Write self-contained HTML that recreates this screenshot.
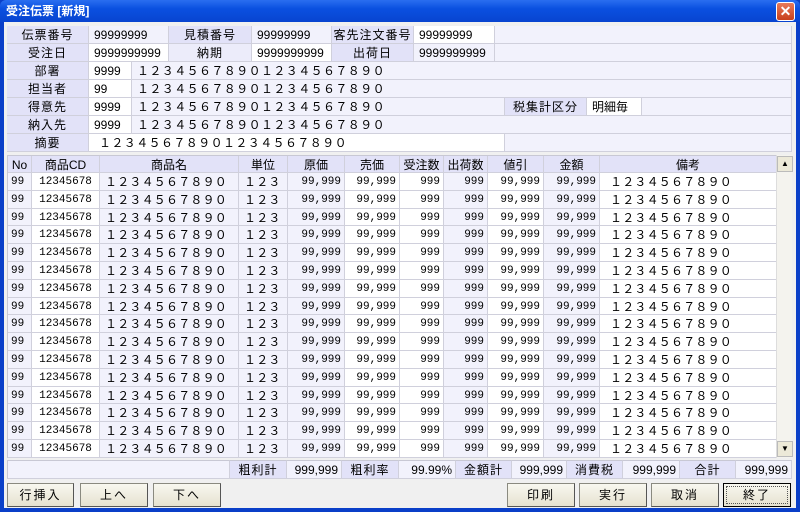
<!DOCTYPE html>
<html><head><meta charset="utf-8"><style>
*{box-sizing:border-box;margin:0;padding:0}
body{width:800px;height:512px;overflow:hidden;background:#0a3fc8;font-family:"Liberation Sans","Noto Sans CJK JP",sans-serif;font-size:12px;color:#000;position:relative}
#title{position:absolute;left:0;top:0;width:800px;height:22px;background:linear-gradient(#2a6ef0,#0a50e0 40%,#0844d0);border-radius:6px 6px 0 0;color:#fff;font-weight:bold;font-size:12px;line-height:22px;padding-left:6px}
#close{position:absolute;right:5px;top:2px;width:19px;height:19px;background:linear-gradient(#e87a5a,#c8401c);border:1px solid #fff;border-radius:3px;color:#fff;font-size:14px;line-height:16px;text-align:center;font-weight:bold}
#client{position:absolute;left:4px;top:22px;width:792px;height:486px;background:#f0f0f0}
.c{position:absolute;height:18px;line-height:18px;border-right:1px solid #d0d0dc;border-bottom:1px solid #d0d0dc;white-space:nowrap;overflow:hidden}
.L{background:#e2e2f8;text-align:center;letter-spacing:1px}
.W{background:#fff;padding-left:5px}
.P{background:#f2f2fc;padding-left:5px}
.fw{letter-spacing:0.4px}
#grid{position:absolute;left:7px;top:155px;width:785px;height:303px;background:#f0f0f0;border:1px solid #c8c8d4}
.row{position:absolute;left:0;height:17.8px;display:flex}
.row div{height:100%;border-right:1px solid #d0d0dc;border-bottom:1px solid #d0d0dc;line-height:18px;white-space:nowrap;overflow:hidden;font-family:"Liberation Mono","Noto Sans CJK JP",monospace;font-size:11px}
.hd div{background:#e2e2f8;text-align:center;font-family:"Liberation Sans","Noto Sans CJK JP",sans-serif;font-size:12px}
.lv{background:#f2f2fc}.wh{background:#fff}
.r{text-align:right;padding-right:3px}.l{padding-left:5px}.ct{text-align:center}
.n{font-family:"Liberation Sans","Noto Sans CJK JP",sans-serif!important;font-size:12px!important;letter-spacing:0.2px}
#sb{position:absolute;left:776px;top:155px;width:16px;height:303px;background:#f4f3ee;border-left:1px solid #ddd}
.sbb{position:absolute;left:0;width:16px;height:16px;background:#ece9d8;border:1px solid #bbb;font-size:8px;text-align:center;line-height:14px}
.btn{position:absolute;top:483px;height:24px;background:linear-gradient(#f8f8f0,#e6e2d0);border:1px solid #8a8a80;border-right-color:#555;border-bottom-color:#555;text-align:center;line-height:22px;letter-spacing:2px}
</style></head><body>
<div id="title">受注伝票 [新規]</div><div id="close">✕</div>
<div id="client"></div>
<div style="position:absolute;left:7px;top:26px;width:785px;height:126px;background:#f2f2fc;border:1px solid #c8c8d4"></div>
<div class="c L" style="left:7px;top:26px;width:82px">伝票番号</div>
<div class="c P" style="left:89px;top:26px;width:80px">99999999</div>
<div class="c L" style="left:169px;top:26px;width:83px">見積番号</div>
<div class="c P" style="left:252px;top:26px;width:80px">99999999</div>
<div class="c L" style="left:332px;top:26px;width:82px">客先注文番号</div>
<div class="c W" style="left:414px;top:26px;width:81px">99999999</div>
<div class="c P" style="left:495px;top:26px;width:297px"></div>
<div class="c L" style="left:7px;top:44px;width:82px">受注日</div>
<div class="c W" style="left:89px;top:44px;width:80px">9999999999</div>
<div class="c L" style="left:169px;top:44px;width:83px;background:#ececfa">納期</div>
<div class="c W" style="left:252px;top:44px;width:80px">9999999999</div>
<div class="c L" style="left:332px;top:44px;width:82px">出荷日</div>
<div class="c P" style="left:414px;top:44px;width:81px">9999999999</div>
<div class="c P" style="left:495px;top:44px;width:297px"></div>
<div class="c L" style="left:7px;top:62px;width:82px">部署</div>
<div class="c W" style="left:89px;top:62px;width:43px">9999</div>
<div class="c P fw" style="left:132px;top:62px;width:660px">１２３４５６７８９０１２３４５６７８９０</div>
<div class="c L" style="left:7px;top:80px;width:82px">担当者</div>
<div class="c W" style="left:89px;top:80px;width:43px">99</div>
<div class="c P fw" style="left:132px;top:80px;width:660px">１２３４５６７８９０１２３４５６７８９０</div>
<div class="c L" style="left:7px;top:98px;width:82px">得意先</div>
<div class="c W" style="left:89px;top:98px;width:43px">9999</div>
<div class="c P fw" style="left:132px;top:98px;width:373px">１２３４５６７８９０１２３４５６７８９０</div>
<div class="c L" style="left:505px;top:98px;width:82px">税集計区分</div>
<div class="c W" style="left:587px;top:98px;width:55px">明細毎</div>
<div class="c P" style="left:642px;top:98px;width:150px"></div>
<div class="c L" style="left:7px;top:116px;width:82px">納入先</div>
<div class="c W" style="left:89px;top:116px;width:43px">9999</div>
<div class="c P fw" style="left:132px;top:116px;width:660px">１２３４５６７８９０１２３４５６７８９０</div>
<div class="c L" style="left:7px;top:134px;width:82px">摘要</div>
<div class="c W fw" style="left:89px;top:134px;width:416px;padding-left:10px">１２３４５６７８９０１２３４５６７８９０</div>
<div class="c P" style="left:505px;top:134px;width:287px"></div>

<div id="grid">
<div class="row hd" style="top:0;height:17px"><div style="width:24px">No</div><div style="width:68px">商品CD</div><div style="width:139px">商品名</div><div style="width:49px">単位</div><div style="width:57px">原価</div><div style="width:55px">売価</div><div style="width:44px">受注数</div><div style="width:44px">出荷数</div><div style="width:56px">値引</div><div style="width:56px">金額</div><div style="width:177px">備考</div></div>
<div class="row" style="top:17px"><div class="lv l" style="width:24px;padding-left:3px">99</div><div class="wh ct" style="width:68px">12345678</div><div class="lv l n" style="width:139px">１２３４５６７８９０</div><div class="lv l n" style="width:49px">１２３</div><div class="lv r" style="width:57px">99,999</div><div class="wh r" style="width:55px">99,999</div><div class="wh r" style="width:44px">999</div><div class="lv r" style="width:44px">999</div><div class="wh r" style="width:56px">99,999</div><div class="lv r" style="width:56px">99,999</div><div class="wh l n" style="width:177px;padding-left:10px">１２３４５６７８９０</div></div>
<div class="row" style="top:34.8px"><div class="lv l" style="width:24px;padding-left:3px">99</div><div class="wh ct" style="width:68px">12345678</div><div class="lv l n" style="width:139px">１２３４５６７８９０</div><div class="lv l n" style="width:49px">１２３</div><div class="lv r" style="width:57px">99,999</div><div class="wh r" style="width:55px">99,999</div><div class="wh r" style="width:44px">999</div><div class="lv r" style="width:44px">999</div><div class="wh r" style="width:56px">99,999</div><div class="lv r" style="width:56px">99,999</div><div class="wh l n" style="width:177px;padding-left:10px">１２３４５６７８９０</div></div>
<div class="row" style="top:52.6px"><div class="lv l" style="width:24px;padding-left:3px">99</div><div class="wh ct" style="width:68px">12345678</div><div class="lv l n" style="width:139px">１２３４５６７８９０</div><div class="lv l n" style="width:49px">１２３</div><div class="lv r" style="width:57px">99,999</div><div class="wh r" style="width:55px">99,999</div><div class="wh r" style="width:44px">999</div><div class="lv r" style="width:44px">999</div><div class="wh r" style="width:56px">99,999</div><div class="lv r" style="width:56px">99,999</div><div class="wh l n" style="width:177px;padding-left:10px">１２３４５６７８９０</div></div>
<div class="row" style="top:70.4px"><div class="lv l" style="width:24px;padding-left:3px">99</div><div class="wh ct" style="width:68px">12345678</div><div class="lv l n" style="width:139px">１２３４５６７８９０</div><div class="lv l n" style="width:49px">１２３</div><div class="lv r" style="width:57px">99,999</div><div class="wh r" style="width:55px">99,999</div><div class="wh r" style="width:44px">999</div><div class="lv r" style="width:44px">999</div><div class="wh r" style="width:56px">99,999</div><div class="lv r" style="width:56px">99,999</div><div class="wh l n" style="width:177px;padding-left:10px">１２３４５６７８９０</div></div>
<div class="row" style="top:88.2px"><div class="lv l" style="width:24px;padding-left:3px">99</div><div class="wh ct" style="width:68px">12345678</div><div class="lv l n" style="width:139px">１２３４５６７８９０</div><div class="lv l n" style="width:49px">１２３</div><div class="lv r" style="width:57px">99,999</div><div class="wh r" style="width:55px">99,999</div><div class="wh r" style="width:44px">999</div><div class="lv r" style="width:44px">999</div><div class="wh r" style="width:56px">99,999</div><div class="lv r" style="width:56px">99,999</div><div class="wh l n" style="width:177px;padding-left:10px">１２３４５６７８９０</div></div>
<div class="row" style="top:106px"><div class="lv l" style="width:24px;padding-left:3px">99</div><div class="wh ct" style="width:68px">12345678</div><div class="lv l n" style="width:139px">１２３４５６７８９０</div><div class="lv l n" style="width:49px">１２３</div><div class="lv r" style="width:57px">99,999</div><div class="wh r" style="width:55px">99,999</div><div class="wh r" style="width:44px">999</div><div class="lv r" style="width:44px">999</div><div class="wh r" style="width:56px">99,999</div><div class="lv r" style="width:56px">99,999</div><div class="wh l n" style="width:177px;padding-left:10px">１２３４５６７８９０</div></div>
<div class="row" style="top:123.8px"><div class="lv l" style="width:24px;padding-left:3px">99</div><div class="wh ct" style="width:68px">12345678</div><div class="lv l n" style="width:139px">１２３４５６７８９０</div><div class="lv l n" style="width:49px">１２３</div><div class="lv r" style="width:57px">99,999</div><div class="wh r" style="width:55px">99,999</div><div class="wh r" style="width:44px">999</div><div class="lv r" style="width:44px">999</div><div class="wh r" style="width:56px">99,999</div><div class="lv r" style="width:56px">99,999</div><div class="wh l n" style="width:177px;padding-left:10px">１２３４５６７８９０</div></div>
<div class="row" style="top:141.6px"><div class="lv l" style="width:24px;padding-left:3px">99</div><div class="wh ct" style="width:68px">12345678</div><div class="lv l n" style="width:139px">１２３４５６７８９０</div><div class="lv l n" style="width:49px">１２３</div><div class="lv r" style="width:57px">99,999</div><div class="wh r" style="width:55px">99,999</div><div class="wh r" style="width:44px">999</div><div class="lv r" style="width:44px">999</div><div class="wh r" style="width:56px">99,999</div><div class="lv r" style="width:56px">99,999</div><div class="wh l n" style="width:177px;padding-left:10px">１２３４５６７８９０</div></div>
<div class="row" style="top:159.4px"><div class="lv l" style="width:24px;padding-left:3px">99</div><div class="wh ct" style="width:68px">12345678</div><div class="lv l n" style="width:139px">１２３４５６７８９０</div><div class="lv l n" style="width:49px">１２３</div><div class="lv r" style="width:57px">99,999</div><div class="wh r" style="width:55px">99,999</div><div class="wh r" style="width:44px">999</div><div class="lv r" style="width:44px">999</div><div class="wh r" style="width:56px">99,999</div><div class="lv r" style="width:56px">99,999</div><div class="wh l n" style="width:177px;padding-left:10px">１２３４５６７８９０</div></div>
<div class="row" style="top:177.2px"><div class="lv l" style="width:24px;padding-left:3px">99</div><div class="wh ct" style="width:68px">12345678</div><div class="lv l n" style="width:139px">１２３４５６７８９０</div><div class="lv l n" style="width:49px">１２３</div><div class="lv r" style="width:57px">99,999</div><div class="wh r" style="width:55px">99,999</div><div class="wh r" style="width:44px">999</div><div class="lv r" style="width:44px">999</div><div class="wh r" style="width:56px">99,999</div><div class="lv r" style="width:56px">99,999</div><div class="wh l n" style="width:177px;padding-left:10px">１２３４５６７８９０</div></div>
<div class="row" style="top:195px"><div class="lv l" style="width:24px;padding-left:3px">99</div><div class="wh ct" style="width:68px">12345678</div><div class="lv l n" style="width:139px">１２３４５６７８９０</div><div class="lv l n" style="width:49px">１２３</div><div class="lv r" style="width:57px">99,999</div><div class="wh r" style="width:55px">99,999</div><div class="wh r" style="width:44px">999</div><div class="lv r" style="width:44px">999</div><div class="wh r" style="width:56px">99,999</div><div class="lv r" style="width:56px">99,999</div><div class="wh l n" style="width:177px;padding-left:10px">１２３４５６７８９０</div></div>
<div class="row" style="top:212.8px"><div class="lv l" style="width:24px;padding-left:3px">99</div><div class="wh ct" style="width:68px">12345678</div><div class="lv l n" style="width:139px">１２３４５６７８９０</div><div class="lv l n" style="width:49px">１２３</div><div class="lv r" style="width:57px">99,999</div><div class="wh r" style="width:55px">99,999</div><div class="wh r" style="width:44px">999</div><div class="lv r" style="width:44px">999</div><div class="wh r" style="width:56px">99,999</div><div class="lv r" style="width:56px">99,999</div><div class="wh l n" style="width:177px;padding-left:10px">１２３４５６７８９０</div></div>
<div class="row" style="top:230.6px"><div class="lv l" style="width:24px;padding-left:3px">99</div><div class="wh ct" style="width:68px">12345678</div><div class="lv l n" style="width:139px">１２３４５６７８９０</div><div class="lv l n" style="width:49px">１２３</div><div class="lv r" style="width:57px">99,999</div><div class="wh r" style="width:55px">99,999</div><div class="wh r" style="width:44px">999</div><div class="lv r" style="width:44px">999</div><div class="wh r" style="width:56px">99,999</div><div class="lv r" style="width:56px">99,999</div><div class="wh l n" style="width:177px;padding-left:10px">１２３４５６７８９０</div></div>
<div class="row" style="top:248.4px"><div class="lv l" style="width:24px;padding-left:3px">99</div><div class="wh ct" style="width:68px">12345678</div><div class="lv l n" style="width:139px">１２３４５６７８９０</div><div class="lv l n" style="width:49px">１２３</div><div class="lv r" style="width:57px">99,999</div><div class="wh r" style="width:55px">99,999</div><div class="wh r" style="width:44px">999</div><div class="lv r" style="width:44px">999</div><div class="wh r" style="width:56px">99,999</div><div class="lv r" style="width:56px">99,999</div><div class="wh l n" style="width:177px;padding-left:10px">１２３４５６７８９０</div></div>
<div class="row" style="top:266.2px"><div class="lv l" style="width:24px;padding-left:3px">99</div><div class="wh ct" style="width:68px">12345678</div><div class="lv l n" style="width:139px">１２３４５６７８９０</div><div class="lv l n" style="width:49px">１２３</div><div class="lv r" style="width:57px">99,999</div><div class="wh r" style="width:55px">99,999</div><div class="wh r" style="width:44px">999</div><div class="lv r" style="width:44px">999</div><div class="wh r" style="width:56px">99,999</div><div class="lv r" style="width:56px">99,999</div><div class="wh l n" style="width:177px;padding-left:10px">１２３４５６７８９０</div></div>
<div class="row" style="top:284px"><div class="lv l" style="width:24px;padding-left:3px">99</div><div class="wh ct" style="width:68px">12345678</div><div class="lv l n" style="width:139px">１２３４５６７８９０</div><div class="lv l n" style="width:49px">１２３</div><div class="lv r" style="width:57px">99,999</div><div class="wh r" style="width:55px">99,999</div><div class="wh r" style="width:44px">999</div><div class="lv r" style="width:44px">999</div><div class="wh r" style="width:56px">99,999</div><div class="lv r" style="width:56px">99,999</div><div class="wh l n" style="width:177px;padding-left:10px">１２３４５６７８９０</div></div>
</div>
<div id="sb"><div class="sbb" style="top:1px">▲</div><div class="sbb" style="top:286px">▼</div></div>

<div class="c P" style="left:7px;top:460px;width:223px;border-top:1px solid #c8c8d4;border-left:1px solid #c8c8d4;height:19px"></div>
<div class="c L" style="left:230px;top:460px;width:57px;border-top:1px solid #c8c8d4;height:19px">粗利計</div>
<div class="c P" style="left:287px;top:460px;width:55px;border-top:1px solid #c8c8d4;height:19px;text-align:right;padding-right:3px">999,999</div>
<div class="c L" style="left:342px;top:460px;width:57px;border-top:1px solid #c8c8d4;height:19px">粗利率</div>
<div class="c P" style="left:399px;top:460px;width:57px;border-top:1px solid #c8c8d4;height:19px;text-align:right;padding-right:3px">99.99%</div>
<div class="c L" style="left:456px;top:460px;width:56px;border-top:1px solid #c8c8d4;height:19px">金額計</div>
<div class="c P" style="left:512px;top:460px;width:55px;border-top:1px solid #c8c8d4;height:19px;text-align:right;padding-right:3px">999,999</div>
<div class="c L" style="left:567px;top:460px;width:56px;border-top:1px solid #c8c8d4;height:19px">消費税</div>
<div class="c P" style="left:623px;top:460px;width:57px;border-top:1px solid #c8c8d4;height:19px;text-align:right;padding-right:3px">999,999</div>
<div class="c L" style="left:680px;top:460px;width:56px;border-top:1px solid #c8c8d4;height:19px">合計</div>
<div class="c P" style="left:736px;top:460px;width:56px;border-top:1px solid #c8c8d4;height:19px;text-align:right;padding-right:3px">999,999</div>

<div class="btn" style="left:7px;width:67px">行挿入</div>
<div class="btn" style="left:80px;width:68px">上へ</div>
<div class="btn" style="left:153px;width:68px">下へ</div>
<div class="btn" style="left:507px;width:68px">印刷</div>
<div class="btn" style="left:579px;width:68px">実行</div>
<div class="btn" style="left:651px;width:68px">取消</div>
<div class="btn" style="left:723px;width:68px;border:1px solid #000;outline:1px dotted #555;outline-offset:-4px">終了</div>
</body></html>
